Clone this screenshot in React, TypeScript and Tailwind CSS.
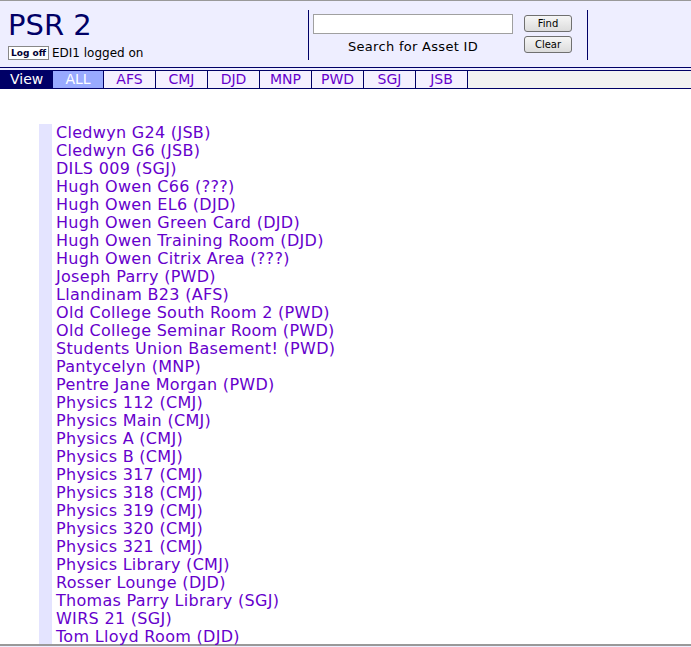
const sites = [
  'Cledwyn G24 (JSB)',
  'Cledwyn G6 (JSB)',
  'DILS 009 (SGJ)',
  'Hugh Owen C66 (???)',
  'Hugh Owen EL6 (DJD)',
  'Hugh Owen Green Card (DJD)',
  'Hugh Owen Training Room (DJD)',
  'Hugh Owen Citrix Area (???)',
  'Joseph Parry (PWD)',
  'Llandinam B23 (AFS)',
  'Old College South Room 2 (PWD)',
  'Old College Seminar Room (PWD)',
  'Students Union Basement! (PWD)',
  'Pantycelyn (MNP)',
  'Pentre Jane Morgan (PWD)',
  'Physics 112 (CMJ)',
  'Physics Main (CMJ)',
  'Physics A (CMJ)',
  'Physics B (CMJ)',
  'Physics 317 (CMJ)',
  'Physics 318 (CMJ)',
  'Physics 319 (CMJ)',
  'Physics 320 (CMJ)',
  'Physics 321 (CMJ)',
  'Physics Library (CMJ)',
  'Rosser Lounge (DJD)',
  'Thomas Parry Library (SGJ)',
  'WIRS 21 (SGJ)',
  'Tom Lloyd Room (DJD)',
]

const tabs = ['AFS', 'CMJ', 'DJD', 'MNP', 'PWD', 'SGJ', 'JSB']

function Header() {
  return (
    <div className="flex h-[67px] border-b border-[#000066] bg-[#eeeeff]">
      <div className="w-[308px] pl-[8px] pt-[7px]">
        <div className="text-[29px] leading-[34px] text-[#000066]">PSR 2</div>
        <div className="mt-[2px] flex items-center gap-[3px]">
          <button className="h-[14px] border border-[#888] bg-white px-[2px] text-[9px] leading-[11px] font-bold text-[#000033]">
            Log off
          </button>
          <span className="text-[12px] text-black">EDI1 logged on</span>
        </div>
      </div>
      <div className="mt-[9px] flex h-[50px] w-[280px] border-l border-r border-[#000066] pl-[4px]">
        <div className="flex w-[200px] flex-col items-center pt-[4px]">
          <input className="h-[20px] w-[200px] border border-[#a0a0a0] bg-white" />
          <span className="mt-[3px] text-[13px] tracking-[0.3px] text-black">Search for Asset ID</span>
        </div>
        <div className="ml-[11px] flex flex-col gap-[4px] pt-[5px]">
          <button className="h-[17px] w-[48px] rounded-[3px] border border-[#707070] bg-gradient-to-b from-[#f6f6f6] to-[#dcdcdc] text-[10px] text-black">
            Find
          </button>
          <button className="h-[17px] w-[48px] rounded-[3px] border border-[#707070] bg-gradient-to-b from-[#f6f6f6] to-[#dcdcdc] text-[10px] text-black">
            Clear
          </button>
        </div>
      </div>
    </div>
  )
}

function Tabs() {
  return (
    <div className="mt-[2px] flex h-[19px] border-t border-b border-[#000066] text-[14px] leading-[17px]">
      <div className="w-[53px] bg-[#000066] pl-[10px] text-white">View</div>
      <div className="w-[51px] border-r border-[#000066] bg-[#99aaff] text-center text-white">ALL</div>
      {tabs.map((t) => (
        <div key={t} className="w-[52px] border-r border-[#000066] bg-[#f4f0ff] text-center text-[#6600cc]">
          {t}
        </div>
      ))}
      <div className="flex-1 bg-[#f2f2f2]" />
    </div>
  )
}

export default function App() {
  return (
    <div className="h-[647px] w-[691px] overflow-hidden border-t border-[#999] bg-[#eeeeff] font-['DejaVu_Sans',Verdana,sans-serif]">
      <Header />
      <Tabs />
      <div className="h-[557px] border-b-2 border-[#999] bg-white pt-[35px] pl-[39px]">
        <div className="h-full border-l-[13px] border-[#e4e4ff] pl-[4px]">
          {sites.map((s) => (
            <div key={s} className="text-[16px] leading-[18px] tracking-[0.3px] text-[#6600cc]">
              {s}
            </div>
          ))}
        </div>
      </div>
    </div>
  )
}
